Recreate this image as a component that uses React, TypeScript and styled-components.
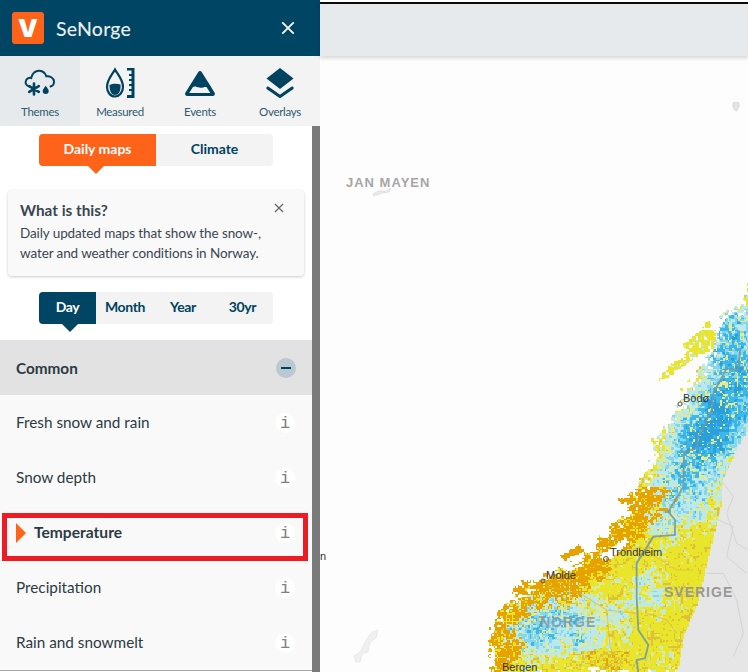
import React, { useMemo } from 'react';
import styled, { createGlobalStyle } from 'styled-components';

const GlobalStyle = createGlobalStyle`
  html, body, #root {
    height: 100%;
    margin: 0;
  }
  body {
    font-family: 'Lato', 'Noto Sans', sans-serif;
    overflow: hidden;
    background: #fdfdfd;
  }
  * {
    box-sizing: border-box;
  }
`;

const NAVY = '#00425f';
const ORANGE = '#ff6319';

const Page = styled.div`
  display: flex;
  width: 748px;
  height: 672px;
  overflow: hidden;
`;

const Sidebar = styled.aside`
  display: flex;
  flex-direction: column;
  flex: 0 0 320px;
  height: 100%;
`;

const Header = styled.header`
  display: flex;
  align-items: center;
  flex: 0 0 56px;
  padding: 0 25px 0 12px;
  background: #004563;
  color: #e8eef1;
`;

const Logo = styled.div`
  display: flex;
  align-items: center;
  justify-content: center;
  width: 32px;
  height: 32px;
  border-radius: 3px;
  background: ${ORANGE};
  color: #fff;
  font-family: 'Inter', sans-serif;
  font-size: 25px;
  font-weight: 900;
  line-height: 1;
`;

const Title = styled.div`
  flex: 1;
  margin-left: 12px;
  font-size: 19.500px;
  font-weight: 500;
  letter-spacing: 0.2px;
`;

const CloseButton = styled.div`
  display: flex;
  width: 14px;
  height: 14px;
`;

const Tabs = styled.nav`
  display: flex;
  flex: 0 0 70px;
  background: #f3f3f3;
`;

const Tab = styled.div<{ $active?: boolean }>`
  display: flex;
  flex-direction: column;
  align-items: center;
  flex: 1;
  padding-top: 10px;
  background: ${(p) => (p.$active ? '#e6eaed' : 'transparent')};
  color: #2f5a70;
  font-size: 11.500px;
  letter-spacing: -0.3px;
  line-height: 16px;

  svg {
    display: block;
    margin-bottom: 6px;
  }
`;

const Body = styled.div`
  display: flex;
  flex: 1;
  min-height: 0;
`;

const Panel = styled.div`
  position: relative;
  display: flex;
  flex-direction: column;
  flex: 0 0 312px;
  padding-top: 8px;
  background: #fff;
  border-radius: 3px 0 0 0;
`;

const Scrollbar = styled.div`
  flex: 0 0 8px;
  background: #7a7a7a;
`;

const Segmented = styled.div`
  display: flex;
  align-self: center;
  width: 234px;
  height: 32px;
  border-radius: 4px;
  background: #f3f3f3;
`;

const Segment = styled.div<{ $active?: boolean; $color?: string; $width: number; $arrow?: number; $tight?: boolean }>`
  position: relative;
  display: flex;
  align-items: center;
  justify-content: center;
  flex: 0 0 ${(p) => p.$width}px;
  padding-bottom: 3px;
  border-radius: 4px 0 0 4px;
  background: ${(p) => (p.$active ? p.$color : 'transparent')};
  color: ${(p) => (p.$active ? '#fff' : NAVY)};
  font-size: 14px;
  font-weight: 700;
  letter-spacing: ${(p) => (p.$tight ? '-0.35px' : '0')};

  ${(p) =>
    p.$active &&
    `&::after {
      content: '';
      position: absolute;
      top: 100%;
      left: ${p.$arrow}px;
      border-style: solid;
      border-width: 8px 8px 0 8px;
      border-color: ${p.$color} transparent transparent transparent;
    }`}
`;

const InfoCard = styled.section`
  position: relative;
  margin: 24px 8px 16px;
  height: 86px;
  padding: 10px 12px;
  border-radius: 4px;
  background: #f9f9f9;
  box-shadow: 0 1px 3px rgba(0, 0, 0, 0.2);
  color: #3a4652;
`;

const CardTitle = styled.div`
  font-size: 15.300px;
  font-weight: 700;
  line-height: 20px;
  margin-bottom: 3px;
`;

const CardText = styled.p`
  margin: 0;
  font-size: 13.500px;
  letter-spacing: -0.1px;
  line-height: 20px;
`;

const CardClose = styled.div`
  position: absolute;
  top: 13px;
  right: 20px;
  display: flex;
`;

const Group = styled.div`
  display: flex;
  align-items: center;
  justify-content: space-between;
  height: 55px;
  margin-top: 16px;
  padding: 0 16px;
  background: #e2e2e2;
  border-top: 1px solid #dfe5ea;
  color: #2c3a44;
  font-size: 15.300px;
  font-weight: 700;
`;

const Collapse = styled.div`
  position: relative;
  width: 20px;
  height: 20px;
  border-radius: 50%;
  background: #b9c9cf;

  &::after {
    content: '';
    position: absolute;
    left: 5px;
    top: 9px;
    width: 10px;
    height: 2px;
    background: ${NAVY};
  }
`;

const List = styled.div`
  background: #f9f9f9;
  border-bottom: 1px solid #a8a8a8;
`;

const Row = styled.div<{ $selected?: boolean }>`
  display: flex;
  align-items: center;
  height: 55px;
  padding: 0 17px 0 16px;
  color: #2c3a44;
  font-size: ${(p) => (p.$selected ? '15.600px' : '15.300px')};
  font-weight: ${(p) => (p.$selected ? 700 : 400)};
`;

const Marker = styled.span`
  width: 0;
  height: 0;
  margin-right: 8px;
  border-style: solid;
  border-width: 10.500px 0 10.500px 10px;
  border-color: transparent transparent transparent ${ORANGE};
`;

const RowLabel = styled.span`
  flex: 1;
  padding-bottom: 2px;
`;

const InfoBadge = styled.span`
  display: flex;
  align-items: center;
  justify-content: center;
  width: 20px;
  height: 20px;
  padding-top: 2px;
  border-radius: 50%;
  background: #fff;
  color: #808080;
  font-family: 'Liberation Mono', monospace;
  font-size: 17px;
  font-weight: 400;
`;

const Highlight = styled.div`
  position: absolute;
  left: 2px;
  top: 387px;
  width: 306px;
  height: 48px;
  border: 5px solid #ed1c24;
  pointer-events: none;
`;

const Main = styled.main`
  display: flex;
  flex-direction: column;
  flex: 1;
  min-width: 0;
`;

const TopBar = styled.div`
  flex: 0 0 56px;
  background: #e6eaed;
  border-top: 2px solid #fff;
  box-shadow: 0 2px 4px rgba(0, 0, 0, 0.16);
  position: relative;
  z-index: 1;

  &::before {
    content: '';
    display: block;
    height: 2px;
    background: #0a0a0a;
  }
`;

const MapArea = styled.div`
  flex: 1;
  background: #fdfdfd;

  svg {
    display: block;
  }
`;

type Pt = [number, number];

// coordinates read off the map at 3x, origin (480, 280)
const coastLine: Pt[] = [
  [815, 10], [775, 60], [770, 90], [730, 100], [720, 150], [690, 200], [680, 250], [640, 280], [620, 320], [600, 370],
  [560, 420], [520, 480], [510, 520], [495, 580], [490, 610], [440, 680], [410, 710], [370, 770], [345, 800],
  [300, 830], [240, 855], [190, 875], [130, 920], [80, 960], [45, 1010], [25, 1080], [30, 1180], [900, 1180], [900, 10],
];
const eastEdge: Pt[] = [
  [-50, 1180], [590, 1180], [610, 1060], [650, 970], [690, 800], [720, 680], [725, 600], [770, 500], [815, 430], [815, 0], [-50, 0],
];
const islandsYellow: Pt[][] = [
  [[528, 302], [565, 255], [630, 210], [645, 170], [680, 118], [692, 140], [668, 195], [628, 240], [575, 282]],
  [[605, 195], [650, 155], [705, 145], [700, 205], [640, 225]],
];
const islandsOrange: Pt[][] = [
  [[410, 655], [450, 650], [448, 672], [420, 665]],
  [[240, 825], [295, 790], [312, 810], [250, 838]],
  [[340, 790], [380, 770], [375, 800], [350, 800]],
];
const fjord: Pt[] = [[356, 825], [440, 768], [442, 785], [395, 832], [365, 838]];

const blobs: [number, number, number, number][] = [
  [790, 290, 130, 1.7], [720, 420, 100, 1.3], [640, 470, 80, 1.1], [660, 570, 100, 1.0], [570, 620, 80, 0.9],
  [540, 730, 50, 0.7], [640, 700, 60, 0.5], [500, 930, 60, 0.8], [420, 1010, 50, 0.5], [250, 1020, 110, 0.9],
  [150, 1060, 90, 0.9], [320, 1060, 70, 0.5], [780, 130, 70, 0.9], [720, 180, 60, 0.7],
];

const inside = (pts: Pt[], x: number, y: number) => {
  let hit = false;
  for (let i = 0, j = pts.length - 1; i < pts.length; j = i++) {
    const [xi, yi] = pts[i];
    const [xj, yj] = pts[j];
    if (yi > y !== yj > y && x < ((xj - xi) * (y - yi)) / (yj - yi) + xi) hit = !hit;
  }
  return hit;
};

const hash = (x: number, y: number) => {
  const s = Math.sin(x * 127.1 + y * 311.7) * 43758.5453;
  return s - Math.floor(s);
};

const smooth = (x: number, y: number) => {
  const ix = Math.floor(x);
  const iy = Math.floor(y);
  const fx = x - ix;
  const fy = y - iy;
  const u = fx * fx * (3 - 2 * fx);
  const v = fy * fy * (3 - 2 * fy);
  const top = hash(ix, iy) * (1 - u) + hash(ix + 1, iy) * u;
  const bottom = hash(ix, iy + 1) * (1 - u) + hash(ix + 1, iy + 1) * u;
  return top * (1 - v) + bottom * v;
};

const fbm = (x: number, y: number) =>
  smooth(x / 36, y / 36) * 0.45 + smooth(x / 14, y / 14) * 0.35 + smooth(x / 6, y / 6) * 0.2;

const COLORS = ['#e8a200', '#e9e52a', '#e6ec8c', '#b9e9ee', '#84d6ee', '#3cb7ea', '#2a9fdc', '#dcc23a'];
const [C_ORANGE, C_YELLOW, C_PALE, C_CYAN, C_MID, C_BLUE, C_DEEP, C_TAN] = COLORS.map((_, i) => i);

const pickColor = (zx: number, zy: number) => {
  const speck = hash(zx, zy);
  const sx = zx + (speck - 0.5) * 8;
  const sy = zy + (hash(zy, zx) - 0.5) * 8;
  if (islandsYellow.some((p) => inside(p, sx, sy))) {
    if (smooth(zx / 8, zy / 8) > 0.74) return -1;
    return speck > 0.12 ? C_YELLOW : C_CYAN;
  }
  if (islandsOrange.some((p) => inside(p, sx, sy))) return C_ORANGE;
  if (!inside(eastEdge, zx, zy) || inside(fjord, sx, sy)) return -1;

  const dx = (smooth(zx / 40, zy / 40) - 0.5) * 30 + (smooth(zx / 12, zy / 12) - 0.5) * 26;
  const dy = (smooth(zy / 40, zx / 40) - 0.5) * 30 + (smooth(zy / 12, zx / 12) - 0.5) * 26;
  if (!inside(coastLine, sx + dx, sy + dy)) return -1;
  // ragged fjords within a short way of the shore
  if (!inside(coastLine, sx - 18, sy - 18) && smooth(zx / 9, zy / 9) > 0.68) return -1;

  const n = fbm(zx, zy);
  const fine = smooth(zx / 7, zy / 7);
  let cold = (n - 0.5) * 1.3 + (fine - 0.5) * 1.2;
  blobs.forEach(([bx, by, r, a]) => {
    cold += a * Math.exp(-((zx - bx) ** 2 + (zy - by) ** 2) / (r * r));
  });
  const vein =
    Math.abs(smooth(zx / 28, zy / 28) - 0.5) < 0.025 ||
    Math.abs(smooth((zx + zy * 0.4) / 16, (zy - zx * 0.4) / 16) - 0.5) < 0.02;

  const coastDist = (zx - 490) * 0.714 + (zy - 610) * 0.7;
  if (zy > 620 && coastDist < 60 + n * 80 && cold < 0.85) {
    if (vein) return C_YELLOW;
    return speck > 0.08 ? C_ORANGE : C_YELLOW;
  }
  if (zy > 1110 && zx > 300 && zx < 450 && n > 0.4) return vein ? C_ORANGE : speck > 0.5 ? C_TAN : C_YELLOW;
  if (vein) return cold > 0.5 ? C_PALE : C_TAN;
  if (cold < 0.42) return C_YELLOW;
  if (cold < 0.55) return C_PALE;
  if (cold < 1.15) return C_CYAN;
  if (cold < 1.5) return C_MID;
  if (cold < 2.0) return C_BLUE;
  return C_DEEP;
};

const z = (pts: Pt[]) => pts.map(([x, y]) => `${480 + x / 3},${280 + y / 3}`).join(' ');

const border: Pt[] = [
  [780, 210], [775, 270], [740, 265], [700, 340], [695, 390], [655, 470], [650, 505], [612, 515], [610, 620],
  [565, 695], [585, 720], [585, 765], [520, 770], [470, 850], [470, 950], [475, 1050], [505, 1095], [495, 1135],
  [470, 1140], [475, 1180],
];
const valleys: Pt[][] = [
  [[400, 830], [480, 800], [590, 870], [640, 870]],
  [[470, 1000], [380, 990], [300, 940], [200, 920]],
  [[380, 990], [390, 1100], [420, 1180]],
  [[500, 1000], [560, 1020], [590, 1060]],
];
const swedishRivers: Pt[][] = [
  [[730, 610], [760, 650], [740, 700], [770, 790], [804, 810]],
  [[715, 720], [760, 740], [740, 830], [800, 880]],
  [[680, 880], [730, 880], [770, 960], [790, 1060], [760, 1130]],
];

function MapDrawing() {
  const layers = useMemo(() => {
    const paths: string[] = COLORS.map(() => '');
    const cell = 1.5;
    for (let px = 480; px < 748; px += cell) {
      for (let py = 280; py < 672; py += cell) {
        const c = pickColor((px - 480) * 3, (py - 280) * 3);
        if (c >= 0) paths[c] += `M${px} ${py}h${cell}v${cell}h-${cell}z`;
      }
    }
    return paths;
  }, []);

  return (
    <svg width={428} height={616} viewBox="320 56 428 616">
      <polygon
        points={z([[815, 420], [770, 500], [725, 600], [720, 680], [690, 800], [650, 970], [610, 1060], [585, 1180], [815, 1180]])}
        fill="#e6e6e6"
      />
      {swedishRivers.map((r, i) => (
        <polyline key={i} points={z(r)} fill="none" stroke="#d3d3d3" strokeWidth={1} />
      ))}
      <path d="M733 103l3-1 3 1 0 4-2.500 4-2-1-1.500-3z" fill="#e4e4e4" stroke="#cfcfcf" strokeWidth={0.6} />
      <path d="M373 194l6-3 6 0 3-1 3-2-2 4-7 1-8 3z" fill="#ececec" stroke="#d4d4d4" strokeWidth={0.6} />
      <path d="M354 656l6-4 6-12 6-8 6-2-2 8-6 4-2 10-6 2-2 8-4 0z" fill="#f0f0f0" stroke="#e2e2e2" strokeWidth={0.6} />
      {layers.map((d, i) => (
        <path key={i} d={d} fill={COLORS[i]} shapeRendering="crispEdges" />
      ))}
      {valleys.map((v, i) => (
        <polyline key={i} points={z(v)} fill="none" stroke="#d9b83a" strokeOpacity={0.6} strokeWidth={1.200} />
      ))}
      <polyline points={z(border)} fill="none" stroke="#6f9aa8" strokeOpacity={0.9} strokeWidth={1.800} />
      <text x={540} y={627} fontFamily="Liberation Sans" fontWeight={700} fontSize={14} letterSpacing={1} fill="#7f97a4" fillOpacity={0.85}>NORGE</text>
      <text x={664} y={597} fontFamily="Liberation Sans" fontWeight={700} fontSize={14} letterSpacing={1} fill="#999">SVERIGE</text>
      <text x={346} y={187} fontFamily="Liberation Sans" fontWeight={700} fontSize={13} letterSpacing={1} fill="#a6a6a6">JAN MAYEN</text>
      <g fontFamily="Liberation Sans" fontSize={11} fill="#333">
        <text x={683} y={402}>Bodø</text>
        <text x={610} y={556}>Trondheim</text>
        <text x={546} y={579}>Molde</text>
        <text x={502} y={671}>Bergen</text>
        <text x={320} y={560}>n</text>
      </g>
      <g fill="none" stroke="#555" strokeWidth={1}>
        <circle cx={680} cy={404} r={2} />
        <circle cx={606} cy={559} r={2.500} />
        <circle cx={543} cy={581} r={2} />
      </g>
    </svg>
  );
}

const ThemesIcon = () => (
  <svg width={40} height={32} viewBox="0 0 40 32" fill="none">
    <path
      d="M9.500 20.500C6.500 20 5 17.500 5.800 15 6.500 12.500 9 11.300 11.200 12 12 7.500 15.500 4.500 19.500 4.800c3.300.3 5.800 2.500 6.800 5.500 3.500-.6 7.300 1.500 7.700 5 .2 2.500-1.200 4.500-3.500 5.200"
      stroke={NAVY}
      strokeWidth={2}
      strokeLinecap="round"
    />
    <path d="M14 17.500v11M9.200 20.200l9.600 5.600M18.800 20.200l-9.600 5.600" stroke={NAVY} strokeWidth={2.600} strokeLinecap="round" />
    <path d="M25.700 19.800c1.600 2.400 3 3.600 3 5.200a3 3 0 0 1-6 0c0-1.600 1.400-2.800 3-5.200z" fill={NAVY} />
  </svg>
);

const MeasuredIcon = () => (
  <svg width={40} height={32} viewBox="0 0 40 32" fill="none">
    <path d="M15 3.500C12 9 7 13.500 7 21a8 9.500 0 0 0 16 0C23 13.500 18 9 15 3.500z" stroke={NAVY} strokeWidth={2.200} />
    <path d="M9.500 19c3-1.500 8-1.500 11-.5.6 6.500-1.800 10.500-5.500 10.500S9.400 25 9.500 19z" fill={NAVY} />
    <path d="M34.500 2H27v2.500h4.500V8h-2.500v2h2.500v3h-2.500v2h2.500v3h-2.500v2h2.500v3h-2.500v2h2.500v4H27V32h7.500z" fill={NAVY} />
  </svg>
);

const EventsIcon = () => (
  <svg width={40} height={32} viewBox="0 0 40 32" fill="none">
    <path
      d="M20 5c-.8 0-1.300.4-1.700 1L5.500 26.500c-1.100 1.700 0 3.500 2 3.500h25c2 0 3.100-1.800 2-3.500L21.700 6c-.4-.6-.9-1-1.700-1z"
      fill={NAVY}
    />
    <path d="M9.200 27l3.600-5.800c2-1.500 3.900-.1 6.200.4 2.800.6 5-.8 7.500-.6l3.800 6z" fill="#f3f3f3" />
  </svg>
);

const OverlaysIcon = () => (
  <svg width={40} height={32} viewBox="0 0 40 32" fill="none">
    <path d="M20 2l13.500 10.500L20 23 6.500 12.500z" fill={NAVY} />
    <path d="M7.800 22L20 30.500 32.200 22" stroke={NAVY} strokeWidth={3} strokeLinecap="round" />
  </svg>
);

const Cross = ({ size, color, width }: { size: number; color: string; width: number }) => (
  <svg width={size} height={size} viewBox="0 0 16 16">
    <path d="M1.500 1.500l13 13M14.500 1.500l-13 13" stroke={color} strokeWidth={width} />
  </svg>
);

const tabs = [
  { label: 'Themes', icon: <ThemesIcon />, active: true },
  { label: 'Measured', icon: <MeasuredIcon /> },
  { label: 'Events', icon: <EventsIcon /> },
  { label: 'Overlays', icon: <OverlaysIcon /> },
];

const rows = ['Fresh snow and rain', 'Snow depth', 'Temperature', 'Precipitation', 'Rain and snowmelt'];

export default function App() {
  return (
    <Page>
      <GlobalStyle />
      <Sidebar>
        <Header>
          <Logo>V</Logo>
          <Title>SeNorge</Title>
          <CloseButton>
            <Cross size={14} color="#fff" width={2} />
          </CloseButton>
        </Header>
        <Tabs>
          {tabs.map((t) => (
            <Tab key={t.label} $active={t.active}>
              {t.icon}
              {t.label}
            </Tab>
          ))}
        </Tabs>
        <Body>
          <Panel>
            <Segmented>
              <Segment $active $color={ORANGE} $width={117} $arrow={49}>Daily maps</Segment>
              <Segment $width={117}>Climate</Segment>
            </Segmented>
            <InfoCard>
              <CardTitle>What is this?</CardTitle>
              <CardText>
                Daily updated maps that show the snow-,
                <br />
                water and weather conditions in Norway.
              </CardText>
              <CardClose>
                <Cross size={10} color="#666" width={2} />
              </CardClose>
            </InfoCard>
            <Segmented>
              <Segment $active $tight $color="#004563" $width={57} $arrow={23}>Day</Segment>
              <Segment $tight $width={58}>Month</Segment>
              <Segment $tight $width={58}>Year</Segment>
              <Segment $tight $width={61}>30yr</Segment>
            </Segmented>
            <Group>
              Common
              <Collapse />
            </Group>
            <List>
              {rows.map((r) => (
                <Row key={r} $selected={r === 'Temperature'}>
                  {r === 'Temperature' && <Marker />}
                  <RowLabel>{r}</RowLabel>
                  <InfoBadge>i</InfoBadge>
                </Row>
              ))}
            </List>
            <Highlight />
          </Panel>
          <Scrollbar />
        </Body>
      </Sidebar>
      <Main>
        <TopBar />
        <MapArea>
          <MapDrawing />
        </MapArea>
      </Main>
    </Page>
  );
}
